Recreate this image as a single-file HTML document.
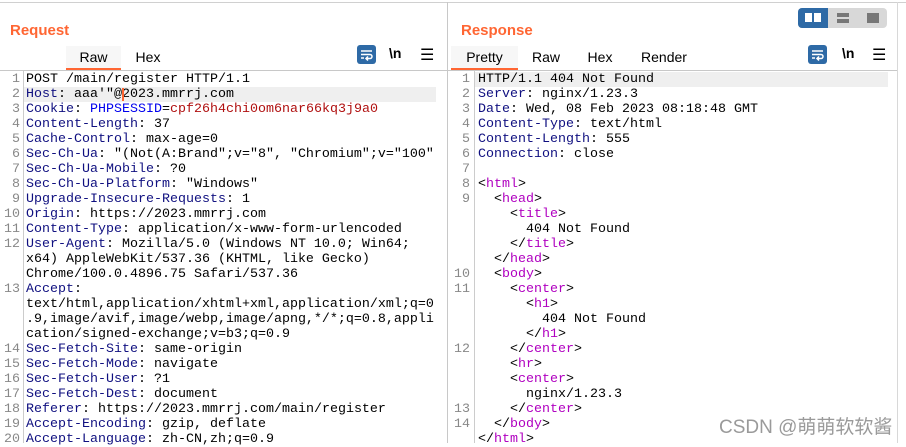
<!DOCTYPE html><html><head><meta charset="utf-8"><style>
body{margin:0;width:906px;height:443px;overflow:hidden;background:#fff;font-family:"Liberation Sans",sans-serif;position:relative}
.a{position:absolute}
.title{color:#ff6633;font-weight:bold;font-size:15px}
.tab{position:absolute;top:46px;height:22px;line-height:22px;font-size:14px;color:#000;text-align:center}
.sel{background:#f7f7f7;border-bottom:2px solid #ff6633}
.code{position:absolute;top:72px;font-family:"Liberation Mono",monospace;font-size:13.33px;line-height:15px;white-space:pre;color:#000}
.num{position:absolute;top:72px;font-family:"Liberation Mono",monospace;font-size:13.33px;line-height:15px;white-space:pre;color:#888;text-align:right}
.k{color:#101080}.b{color:#0000ee}.r{color:#b01010}.t{color:#b000c0}
.wrap{position:absolute;top:45px;width:19px;height:19px;background:#2e6aa6;border-radius:3px}
.ic{position:absolute;top:45px;font-size:14px;font-weight:bold}
</style></head><body>
<div class="a" style="left:0;top:2px;width:906px;height:1px;background:#d0d0d0"></div>
<div class="a" style="left:447px;top:2px;width:1px;height:441px;background:#c8c8c8"></div>
<div class="a" style="left:897px;top:2px;width:1px;height:441px;background:#d8d8d8"></div>
<div class="a title" style="left:10px;top:22px">Request</div>
<div class="tab sel" style="left:66px;width:55px">Raw</div>
<div class="tab" style="left:130px;width:36px">Hex</div>
<div class="wrap" style="left:357px"><svg width="19" height="19"><path d="M4 6h11M4 9.5h9a2 2 0 0 1 0 4h-3M11 11.5l-2 2 2 2M4 13h3" stroke="#fff" stroke-width="1.5" fill="none"/></svg></div>
<div class="ic" style="left:389px">\n</div>
<div class="ic" style="left:420px;font-weight:normal;font-size:16px">☰</div>
<div class="a" style="left:0;top:70px;width:447px;height:1px;background:#c8c8c8"></div>
<div class="a" style="left:24px;top:87px;width:412px;height:15px;background:#efefef"></div>
<div class="a" style="left:23px;top:71px;width:1px;height:372px;background:#ccc"></div>
<div class="num" style="left:0;width:20px">1
2
3
4
5
6
7
8
9
10
11
12


13



14
15
16
17
18
19
20</div>
<div class="code" style="left:26px">POST /main/register HTTP/1.1
<span class="k">Host</span>: aaa'"@2023.mmrrj.com
<span class="k">Cookie</span>: <span class="b">PHPSESSID</span>=<span class="r">cpf26h4chi0om6nar66kq3j9a0</span>
<span class="k">Content-Length</span>: 37
<span class="k">Cache-Control</span>: max-age=0
<span class="k">Sec-Ch-Ua</span>: "(Not(A:Brand";v="8", "Chromium";v="100"
<span class="k">Sec-Ch-Ua-Mobile</span>: ?0
<span class="k">Sec-Ch-Ua-Platform</span>: "Windows"
<span class="k">Upgrade-Insecure-Requests</span>: 1
<span class="k">Origin</span>: https://2023.mmrrj.com
<span class="k">Content-Type</span>: application/x-www-form-urlencoded
<span class="k">User-Agent</span>: Mozilla/5.0 (Windows NT 10.0; Win64;
x64) AppleWebKit/537.36 (KHTML, like Gecko)
Chrome/100.0.4896.75 Safari/537.36
<span class="k">Accept</span>:
text/html,application/xhtml+xml,application/xml;q=0
.9,image/avif,image/webp,image/apng,*/*;q=0.8,appli
cation/signed-exchange;v=b3;q=0.9
<span class="k">Sec-Fetch-Site</span>: same-origin
<span class="k">Sec-Fetch-Mode</span>: navigate
<span class="k">Sec-Fetch-User</span>: ?1
<span class="k">Sec-Fetch-Dest</span>: document
<span class="k">Referer</span>: https://2023.mmrrj.com/main/register
<span class="k">Accept-Encoding</span>: gzip, deflate
<span class="k">Accept-Language</span>: zh-CN,zh;q=0.9</div>
<div class="a" style="left:122px;top:88px;width:2px;height:13px;background:#ff6633"></div>

<div class="a title" style="left:461px;top:22px">Response</div>
<div class="a" style="left:798px;top:8px;width:89px;height:20px;background:#d8d8d8;border-radius:4px"></div>
<div class="a" style="left:798px;top:8px;width:30px;height:20px;background:#2e6aa6;border-radius:4px 0 0 4px"></div>
<div class="a" style="left:805px;top:13px;width:7px;height:9px;background:#fff"></div>
<div class="a" style="left:814px;top:13px;width:7px;height:9px;background:#fff"></div>
<div class="a" style="left:837px;top:13px;width:12px;height:4px;background:#777"></div>
<div class="a" style="left:837px;top:19px;width:12px;height:4px;background:#777"></div>
<div class="a" style="left:867px;top:13px;width:12px;height:10px;background:#777"></div>
<div class="tab sel" style="left:451px;width:67px">Pretty</div>
<div class="tab" style="left:528px;width:36px">Raw</div>
<div class="tab" style="left:582px;width:36px">Hex</div>
<div class="tab" style="left:637px;width:54px">Render</div>
<div class="wrap" style="left:808px"><svg width="19" height="19"><path d="M4 6h11M4 9.5h9a2 2 0 0 1 0 4h-3M11 11.5l-2 2 2 2M4 13h3" stroke="#fff" stroke-width="1.5" fill="none"/></svg></div>
<div class="ic" style="left:842px">\n</div>
<div class="ic" style="left:872px;font-weight:normal;font-size:16px">☰</div>
<div class="a" style="left:448px;top:70px;width:449px;height:1px;background:#c8c8c8"></div>
<div class="a" style="left:475px;top:72px;width:413px;height:15px;background:#efefef"></div>
<div class="a" style="left:474px;top:71px;width:1px;height:372px;background:#ccc"></div>
<div class="num" style="left:450px;width:20px">1
2
3
4
5
6
7
8
9




10
11



12



13
14</div>
<div class="code" style="left:478px">HTTP/1.1 404 Not Found
<span class="k">Server</span>: nginx/1.23.3
<span class="k">Date</span>: Wed, 08 Feb 2023 08:18:48 GMT
<span class="k">Content-Type</span>: text/html
<span class="k">Content-Length</span>: 555
<span class="k">Connection</span>: close

&lt;<span class="t">html</span>&gt;
  &lt;<span class="t">head</span>&gt;
    &lt;<span class="t">title</span>&gt;
      404 Not Found
    &lt;/<span class="t">title</span>&gt;
  &lt;/<span class="t">head</span>&gt;
  &lt;<span class="t">body</span>&gt;
    &lt;<span class="t">center</span>&gt;
      &lt;<span class="t">h1</span>&gt;
        404 Not Found
      &lt;/<span class="t">h1</span>&gt;
    &lt;/<span class="t">center</span>&gt;
    &lt;<span class="t">hr</span>&gt;
    &lt;<span class="t">center</span>&gt;
      nginx/1.23.3
    &lt;/<span class="t">center</span>&gt;
  &lt;/<span class="t">body</span>&gt;
&lt;/<span class="t">html</span>&gt;</div>
<div class="a" style="left:719px;top:412px;font-size:19px;color:rgba(120,120,120,0.75);font-family:'Liberation Sans','Noto Sans CJK SC',sans-serif">CSDN @萌萌软软酱</div>
</body></html>
